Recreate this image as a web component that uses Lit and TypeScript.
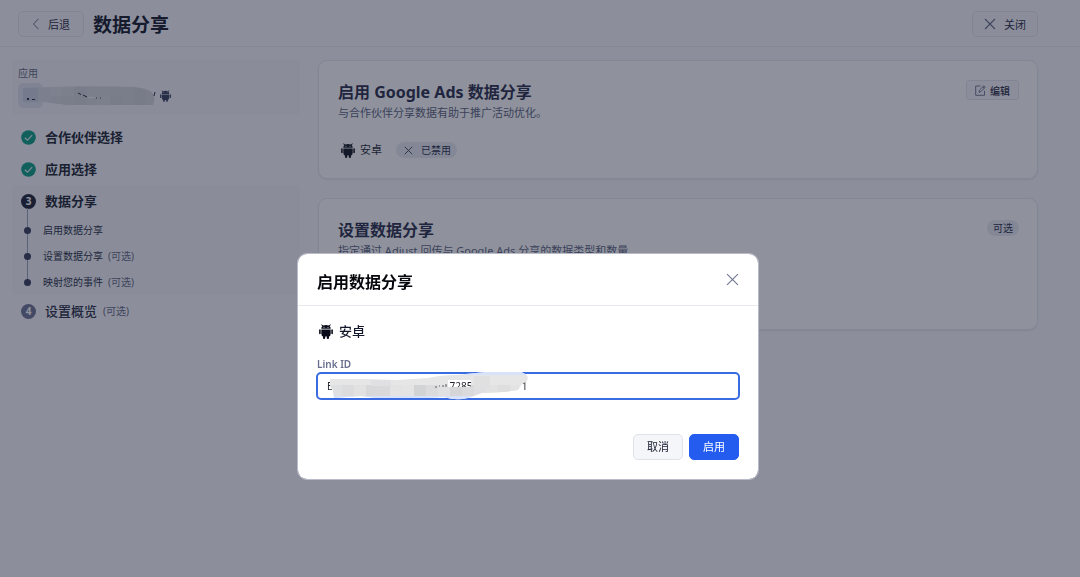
import { LitElement, html, css, svg, nothing } from "lit";
import { customElement, property } from "lit/decorators.js";

const font = css`"Noto Sans", "Noto Sans CJK SC", sans-serif`;

const cross = html`<svg class="cross" viewBox="0 0 12 12" fill="none" stroke="currentColor" stroke-width="1.1" aria-hidden="true">
  <path d="M1 1L11 11M11 1L1 11" />
</svg>`;

const check = html`<svg width="15" height="15" viewBox="0 0 15 15" aria-hidden="true">
  <circle cx="7.5" cy="7.5" r="7.3" fill="#039a80" />
  <path d="M3.8 7.7L6.4 10.2L11.2 5.2" fill="none" stroke="#dff3ee" stroke-width="1.2" />
</svg>`;

@customElement("android-icon")
export class AndroidIcon extends LitElement {
  static styles = css`
    :host { display: inline-flex; width: 14px; height: 15px; color: #090c18; }
    svg { width: 100%; height: 100%; }
  `;
  render() {
    return html`<svg viewBox="0 0 14 15" fill="currentColor" aria-hidden="true">
      <path d="M2.4 .2L4.2 1.4Q7 .5 9.8 1.4L11.6 .2L11.8 .8L10.7 2.2Q11.7 3 11.7 4.8H2.3Q2.3 3 3.3 2.2L2.2 .8Z" />
      <path d="M2.3 5.5H11.7V9.6Q11.7 12.2 9.8 12.6H4.2Q2.3 12.2 2.3 9.6Z" />
      <rect x=".1" y="5.2" width="1.6" height="5" rx=".8" />
      <rect x="12.3" y="5.2" width="1.6" height="5" rx=".8" />
      <rect x="4" y="11" width="2.2" height="3.9" rx=".9" />
      <rect x="7.8" y="11" width="2.2" height="3.9" rx=".9" />
      <circle cx="5" cy="3.2" r=".5" fill="#fff" />
      <circle cx="9" cy="3.2" r=".5" fill="#fff" />
    </svg>`;
  }
}

@customElement("setup-nav")
export class SetupNav extends LitElement {
  static styles = css`
    :host { display: block; }
    .app { background: #f4f5f8; border-radius: 4px; padding: 6px 6px 7px; height: 42px; }
    .label { font-size: 10px; line-height: 14px; color: #5c617c; }
    .name { display: flex; align-items: center; gap: 4px; margin-top: 3px; }
    .name svg { display: block; }
    .name android-icon { width: 11px; height: 12px; color: #2f3654; }
    .steps { list-style: none; margin: 6px 0 0; padding: 0; }
    .step { display: flex; align-items: center; gap: 9px; height: 32px; padding-left: 9px; font-size: 13px; line-height: 18px; font-weight: 700; color: #14182b; }
    .step svg { flex: none; }
    .num { width: 15px; height: 15px; border-radius: 50%; background: #14182e; color: #fff; display: grid; place-items: center; font-size: 10px; line-height: 15px; }
    .num.later { background: #696f91; }
    .later-text { font-weight: 500; color: #20253d; }
    .active { background: #f4f5f8; border-radius: 4px; }
    .subs { list-style: none; margin: 0; padding: 0; position: relative; }
    .subs::before { content: ""; position: absolute; left: 15px; top: -9px; bottom: 13px; width: 1px; background: #989dba; }
    .sub { display: flex; align-items: center; height: 26px; gap: 12px; padding-left: 12px; font-size: 10px; line-height: 14px; color: #20253f; position: relative; }
    .dot { width: 7px; height: 7px; border-radius: 50%; background: #2e3454; }
    .opt { font-size: 10px; font-weight: 400; color: #5c6280; margin-left: -7px; }
    .step .opt { margin-left: -3px; }
  `;
  private sub(text: string, optional = false) {
    return html`<li class="sub"><span class="dot"></span><span>${text}</span>${optional ? html`<span class="opt">(可选)</span>` : nothing}</li>`;
  }
  render() {
    const tones = ["#d8dae2", "#dddee2", "#d8dae0", "#d2d4da", "#d6d8dc", "#d8dade", "#d2d4da", "#d5d7dc", "#d1d3d9", "#d5d7db"];
    return html`
      <div class="app">
        <div class="label">应用</div>
        <div class="name">
          <svg width="138" height="25" viewBox="0 0 138 25" role="img" aria-label="应用名称">
            <defs><clipPath id="smear"><path d="M5 5Q60 2 117 4Q127 5 132 8Q139 12 135 22H50L26 19H5Z" /></clipPath></defs>
            <rect width="25" height="25" rx="5" fill="#dfe1ee" />
            <g clip-path="url(#smear)">
              ${tones.map((c, i) => svg`<rect x=${20 + i * 12} y="0" width="12" height="25" fill=${c} />`)}
              <rect x="5" y="4" width="15" height="15" fill="#cbcee0" />
              <rect x="32" y="13" width="24" height="10" fill="#d3d5da" opacity=".7" />
              <rect x="80" y="4" width="24" height="9" fill="#d7d9dd" opacity=".6" />
            </g>
            <path d="M9 15h2v2H9zM14 16h3v1h-3z" fill="#1d2238" />
            <path d="M60 10l3 1.5M65 12l4 2M137 9l-1 4" stroke="#1d2238" fill="none" />
            <path d="M70 14.5h7" stroke="#f4f4f4" /><path d="M78 15h1M82 15h1" stroke="#333850" />
          </svg>
          <android-icon></android-icon>
        </div>
      </div>
      <ul class="steps">
        <li class="step">${check}<span>合作伙伴选择</span></li>
        <li class="step">${check}<span>应用选择</span></li>
        <li class="active">
          <div class="step"><span class="num">3</span><span>数据分享</span></div>
          <ul class="subs">
            ${this.sub("启用数据分享")}${this.sub("设置数据分享", true)}${this.sub("映射您的事件", true)}
          </ul>
        </li>
        <li class="step"><span class="num later">4</span><span class="later-text">设置概览</span><span class="opt">(可选)</span></li>
      </ul>
    `;
  }
}

@customElement("setting-card")
export class SettingCard extends LitElement {
  @property() heading = "";
  @property() text = "";
  static styles = css`
    :host { display: block; background: #fff; border: 1px solid #e6e7ef; border-radius: 9px; padding: 19px 18px 19px 19px; box-shadow: 0 1px 2px #e4e5ee; box-sizing: border-box; }
    .top { display: flex; justify-content: space-between; align-items: flex-start; }
    h2 { margin: 0; font-size: 16px; line-height: 24px; font-weight: 700; color: #1f2545; }
    p { margin: 0; font-size: 11px; line-height: 18px; color: #555b7a; }
  `;
  render() {
    return html`<div class="top"><div><h2>${this.heading}</h2><p>${this.text}</p></div><slot name="action"></slot></div><slot></slot>`;
  }
}

@customElement("enable-dialog")
export class EnableDialog extends LitElement {
  static styles = css`
    :host { display: block; width: 100%; max-width: 462px; background: #fff; border: 1px solid #b9bbc8; background-clip: padding-box; border-radius: 10px; box-sizing: border-box; }
    .head { display: flex; align-items: center; justify-content: space-between; height: 51px; padding: 0 19px; border-bottom: 1px solid #e9eaef; }
    h2 { margin: 4px 0 0; font-size: 16px; line-height: 24px; font-weight: 700; color: #07080d; }
    button { font-family: inherit; cursor: pointer; }
    .close { border: 0; background: none; padding: 0; width: 13px; height: 13px; display: grid; color: #747b96; }
    .cross { width: 13px; height: 13px; }
    .body { padding: 16px 19px 19px; }
    .platform { display: flex; align-items: center; gap: 6px; padding-left: 2px; font-size: 13px; line-height: 18px; font-weight: 500; color: #14182b; }
    label { display: block; margin-top: 17px; font-size: 10px; line-height: 14px; font-weight: 600; color: #686e8c; }
    .field { position: relative; margin: 1px -1px 0; }
    input { display: block; width: 100%; height: 28px; box-sizing: border-box; border: 2px solid #3b6be0; border-radius: 5px; padding: 0 9px; outline: none; background: #fff; font: 10px ${font}; color: #22252f; }
    .smear { position: absolute; left: 0; top: 0; pointer-events: none; }
    .foot { display: flex; justify-content: flex-end; gap: 6px; margin-top: 34px; }
    .btn { width: 50px; height: 26px; padding: 0; border-radius: 5px; font-size: 11px; line-height: 16px; border: 1px solid #e0e2eb; background: #f5f6fa; color: #14182b; }
    .primary { background: #245cf0; border-color: #245cf0; color: #fff; }
  `;
  render() {
    const gap = (n: number) => "\u00a0".repeat(n);
    const tones = ["#dfe0e2", "#dcdcde", "#e2e2e3", "#d8d8da", "#d9d9db", "#e3e3e4", "#e4e4e5", "#d2d3d5", "#dbdbdd", "#e1e1e3", "#d5d5d7", "#dadadc", "#dfdfe1", "#e2e2e3", "#dededf", "#e3e3e4"];
    return html`
      <div class="head">
        <h2 id="title">启用数据分享</h2>
        <button class="close" aria-label="关闭">${cross}</button>
      </div>
      <div class="body">
        <div class="platform"><android-icon></android-icon>安卓</div>
        <label for="link">Link ID</label>
        <div class="field">
          <input id="link" type="text" .value=${"E" + gap(45) + "7285" + gap(19) + "1"} />
          <svg class="smear" width="214" height="28" viewBox="0 0 214 28" aria-hidden="true">
            <defs><clipPath id="veil"><path clip-rule="evenodd" d="M14 7H50L80 8L112 6Q125 3 140 3L170 0H205Q214 3 211 9L205 13L202 18L188 20L166 21L152 26Q140 29 128 25L110 26H60L45 24L18 26L17 18L14 14ZM132 8H155V15H132Z" /></clipPath></defs>
            <g clip-path="url(#veil)">
              <rect width="214" height="28" fill="#e6e6e7" />
              ${tones.map((c, i) => svg`<rect x=${14 + i * 12} y="13" width="12" height="11" fill=${c} />`)}
              <rect x="55" y="8" width="20" height="6" fill="#e0e0e2" />
              <rect x="158" y="4" width="16" height="12" fill="#e0e0e1" />
              <path d="M14 24H214V28H14Z" fill="#d8e2fa" />
              <path d="M150 0H214V3H150Z" fill="#d8e2fa" />
            </g>
            <path d="M119 15h2M123 14h1M127 13v2M130 12v3" fill="none" stroke="#34373f" stroke-width=".8" />
          </svg>
        </div>
        <div class="foot">
          <button class="btn">取消</button>
          <button class="btn primary">启用</button>
        </div>
      </div>
    `;
  }
}

@customElement("app-root")
export class AppRoot extends LitElement {
  static styles = css`
    :host { display: block; min-height: 100vh; background: #f8f8fd; font-family: ${font}; color: #14182b; }
    header { display: flex; align-items: center; height: 44px; padding: 2px 42px 0 18px; gap: 9px; border-bottom: 1px solid #e9eaf0; }
    header h1 { flex: 1; margin: 2px 0 0; font-size: 19px; line-height: 28px; font-weight: 700; color: #0a0e1e; }
    .btn { display: flex; align-items: center; justify-content: center; gap: 8px; height: 26px; width: 66px; padding: 0; box-sizing: border-box; border: 1px solid #e2e4ed; border-radius: 5px; background: #f7f7fb; font: 11px ${font}; color: #1c213a; }
    .btn svg { flex: none; color: #5d6380; }
    .btn .cross { width: 12px; height: 12px; }
    .edit { width: 53px; height: 20px; gap: 4px; font-size: 10px; font-weight: 500; border-radius: 3px; }
    .layout { display: grid; grid-template-columns: 288px minmax(0, 1fr); gap: 18px; padding: 13px 42px 0 12px; }
    .cards { display: grid; gap: 19px; align-content: start; }
    .second { min-height: 132px; }
    .status { display: flex; align-items: center; gap: 5px; margin-top: 19px; padding-left: 3px; font-size: 11px; line-height: 18px; }
    .pill { display: inline-flex; align-items: center; gap: 8px; height: 16px; padding: 0 6px 0 8px; border-radius: 8px; background: #e9eaf3; font-size: 10px; line-height: 16px; margin-left: 9px; color: #20253f; }
    .pill .cross { width: 9px; height: 9px; }
    .tag { margin: 2px 0 0; padding: 0 6px; }
    .veil { position: fixed; inset: 0; display: flex; justify-content: center; align-items: flex-start; padding: 253px 24px 0 0; box-sizing: border-box; background: rgba(32, 37, 58, 0.5); }
  `;
  render() {
    return html`
      <header>
        <button class="btn">
          <svg width="8" height="12" viewBox="0 0 8 12" fill="none" stroke="currentColor"><path d="M6.5 .8L1.5 6L6.5 11.2" /></svg>后退
        </button>
        <h1>数据分享</h1>
        <button class="btn">${cross}关闭</button>
      </header>
      <div class="layout">
        <setup-nav></setup-nav>
        <main class="cards">
          <setting-card heading="启用 Google Ads 数据分享" text="与合作伙伴分享数据有助于推广活动优化。">
            <button class="btn edit" slot="action">
              <svg width="11" height="11" viewBox="0 0 11 11" fill="none" stroke="currentColor" stroke-width=".9"><path d="M5.5 1H.7V10.3H9.5V5.8M4 7.3L4.4 5.2L8.8 .8L10.2 2.2L5.9 6.7ZM7.8 1.9L9.2 3.2" /></svg>编辑
            </button>
            <div class="status"><android-icon></android-icon><span>安卓</span><span class="pill">${cross}已禁用</span></div>
          </setting-card>
          <setting-card class="second" heading="设置数据分享" text="指定通过 Adjust 回传与 Google Ads 分享的数据类型和数量">
            <span class="pill tag" slot="action">可选</span>
          </setting-card>
        </main>
      </div>
      <div class="veil"><enable-dialog role="dialog" aria-modal="true" aria-label="启用数据分享"></enable-dialog></div>
    `;
  }
}
